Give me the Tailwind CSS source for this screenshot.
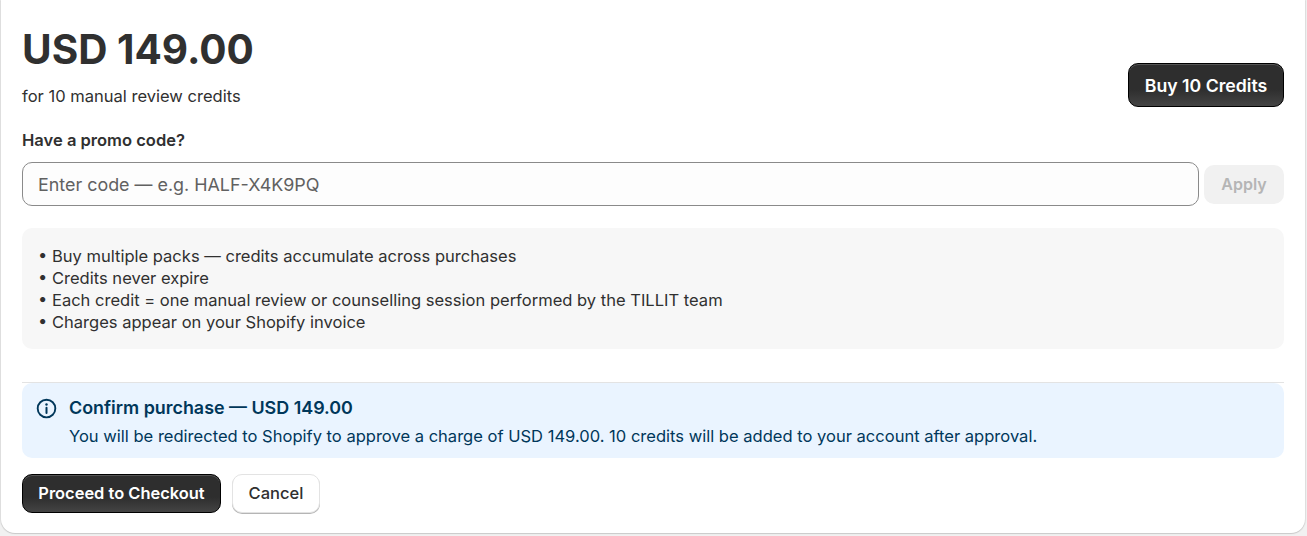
<!DOCTYPE html>
<html lang="en">
<head>
    <meta charset="UTF-8">
    <title>Buy credits</title>
    <script src="https://cdn.jsdelivr.net/npm/@tailwindcss/browser@4"></script>
</head>
<body class="bg-[#f1f1f1] h-[536px] overflow-hidden font-['Inter',sans-serif] text-[#303030]">
    <div class="ml-px mr-[2px] h-[533px] bg-white rounded-b-[14px] shadow-[0_1px_1px_#c9c9c9,1px_0_1px_#dedede,-1px_0_1px_#dedede] px-[21px]">
        <div class="flex justify-between items-end pt-[26px]">
            <div>
                <h1 class="text-[40.5px] leading-[48px] font-bold">USD 149.00</h1>
                <p class="mt-[10px] text-[16.55px] leading-[24px]">for 10 manual review credits</p>
            </div>
            <button class="mb-[1px] h-[44px] w-[156px] pt-[2px] rounded-[10px] bg-gradient-to-b from-[#2e2e2e] from-60% to-[#444] border border-black text-white text-[17.7px] font-semibold shadow-[inset_0_1px_0_#555]">Buy 10 Credits</button>
        </div>

        <label class="block mt-[20px] text-[16.55px] leading-[24px] font-semibold">Have a promo code?</label>

        <div class="flex items-center gap-[5px] mt-[10px]">
            <input type="text" placeholder="Enter code — e.g. HALF-X4K9PQ" class="flex-1 h-[44px] rounded-[10px] border border-[#8a8a8a] bg-[#fdfdfd] px-[15px] text-[17.9px] placeholder:text-[#616161]">
            <button class="w-[80px] h-[39px] rounded-[10px] bg-[#f1f1f1] text-[#b5b5b5] text-[16px] font-semibold">Apply</button>
        </div>

        <ul class="mt-[22px] bg-[#f7f7f7] rounded-[10px] px-[16px] pt-[17px] pb-[16px] text-[16.55px] leading-[22px]">
            <li>• Buy multiple packs — credits accumulate across purchases</li>
            <li>• Credits never expire</li>
            <li>• Each credit = one manual review or counselling session performed by the TILLIT team</li>
            <li>• Charges appear on your Shopify invoice</li>
        </ul>

        <div class="mt-[33px] border-t border-[#e3e3e3]">
            <div class="flex gap-[12px] bg-[#eaf4ff] rounded-[10px] h-[75px] pl-[14px] pr-[15px] pt-[13px]">
                <svg class="w-[21px] h-[21px] mt-[2px] shrink-0 text-[#00375a]" viewBox="0 0 20 20" fill="none" stroke="currentColor">
                    <circle cx="10" cy="10" r="8.4" stroke-width="1.8"/>
                    <path d="M10 9.2v5" stroke-width="1.9" stroke-linecap="round"/>
                    <circle cx="10" cy="6.2" r="1.15" fill="currentColor" stroke="none"/>
                </svg>
                <div class="text-[#00375a]">
                    <p class="text-[17.9px] leading-[24px] font-semibold">Confirm purchase — USD 149.00</p>
                    <p class="text-[16.55px] leading-[24px] mt-[4px]">You will be redirected to Shopify to approve a charge of USD 149.00. 10 credits will be added to your account after approval.</p>
                </div>
            </div>
        </div>

        <div class="flex gap-[11px] mt-[16px]">
            <button class="w-[199px] h-[39px] rounded-[10px] bg-gradient-to-b from-[#2e2e2e] from-60% to-[#444] border border-black text-white text-[16.45px] font-semibold shadow-[inset_0_1px_0_#555]">Proceed to Checkout</button>
            <button class="w-[88px] h-[39px] rounded-[10px] bg-white border border-[#e3e3e3] text-[16.55px] font-medium shadow-[0_1px_0_#b5b5b5]">Cancel</button>
        </div>
    </div>
</body>
</html>
